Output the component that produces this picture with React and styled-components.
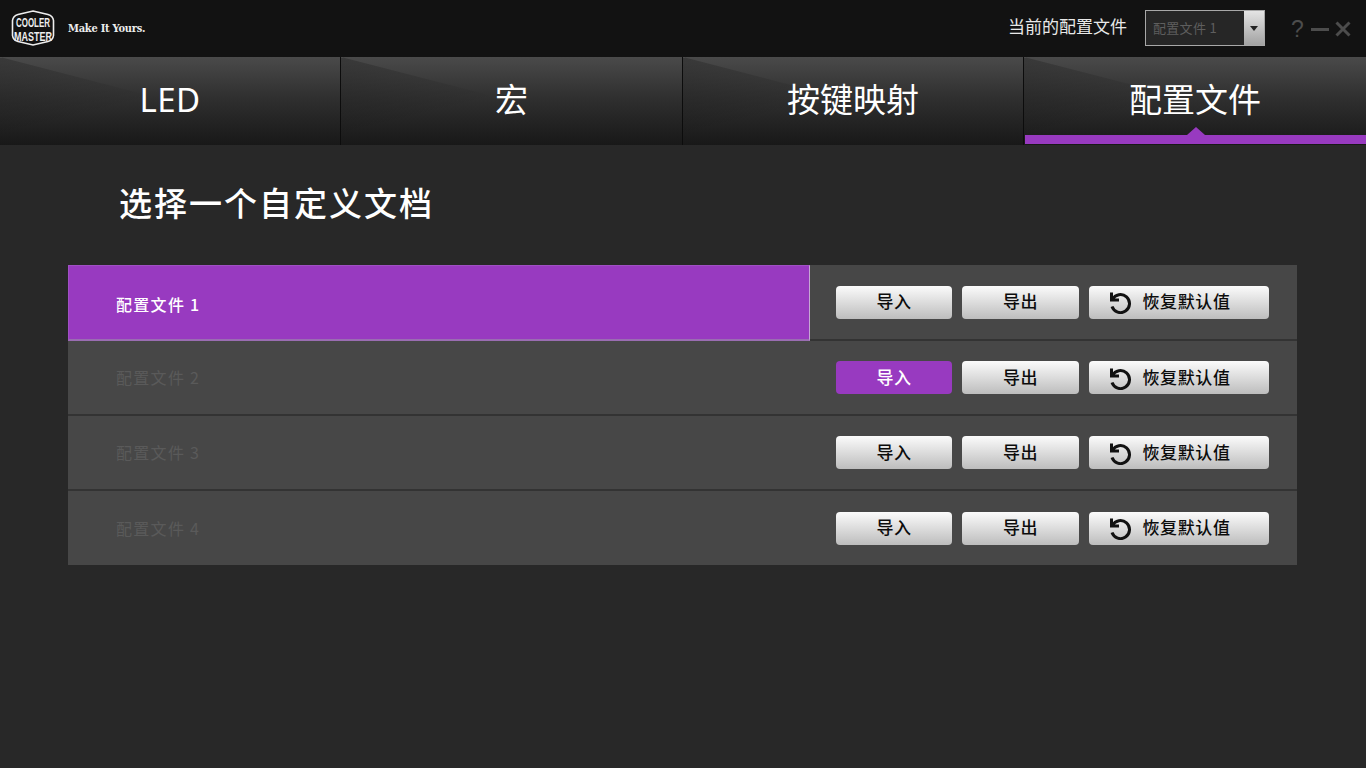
import React from "react";
import styled, { createGlobalStyle } from "styled-components";

const Global = createGlobalStyle`
  html, body { margin: 0; padding: 0; background: #282828; }
  body { font-family: "Noto Sans CJK SC", "Noto Sans", sans-serif; }
  * { box-sizing: border-box; }
`;

const Page = styled.div`
  width: 1366px; height: 768px; overflow: hidden; background: #282828;
  display: flex; flex-direction: column;
`;
const TopBar = styled.header`
  height: 57px; flex: none; background: #121212;
  display: flex; align-items: center; padding: 0 15px 0 11px;
`;
const LogoWrap = styled.div`display: flex; align-items: center; gap: 13px; margin-top: -1px;`;
const LogoSvg = styled.svg`overflow: visible; flex: none;`;
const Slogan = styled.span`
  font-family: "DejaVu Serif Condensed", "DejaVu Serif", serif;
  font-weight: 700; font-size: 11px; color: #ececec; letter-spacing: -0.25px; width: 78px; white-space: nowrap;
`;
const TopRight = styled.div`margin-left: auto; display: flex; align-items: center;`;
const CurrentLabel = styled.span`
  font-size: 17px; line-height: 20px; color: #e8e8e8; margin-right: 18px; margin-top: -5px; white-space: nowrap;
`;
const Select = styled.div`
  width: 120px; height: 36px; display: flex; border: 1px solid #a8a8a8; background: #262626; margin-top: -1px;
`;
const SelectValue = styled.span`
  flex: 1; font-size: 13px; line-height: 34px; color: #5e5e5e; padding-left: 7px; white-space: nowrap; letter-spacing: .3px;
`;
const SelectArrow = styled.span`
  width: 20px; display: flex; align-items: center; justify-content: center;
  background: linear-gradient(#e4e4e4, #a2a2a2);
  &::after {
    content: ""; border-left: 4px solid transparent; border-right: 4px solid transparent; border-top: 5px solid #222;
  }
`;
const WindowButtons = styled.div`display: flex; align-items: center; margin-left: 26px; color: #4c4c4c;`;
const HelpGlyph = styled.span`
  font-family: "Liberation Sans", sans-serif; font-size: 23px; line-height: 24px; width: 20px; font-weight: 400;
`;

const Tabs = styled.nav`
  height: 88px; flex: none; display: grid; grid-template-columns: 340px 342px 341px 343px;
`;
const Tab = styled.div`
  position: relative; overflow: hidden;
  display: flex; align-items: center; justify-content: center; padding-bottom: 3px;
  font-size: 33px; color: #fff; border-left: ${(p) => (p.$first ? "0" : "1px solid #0c0c0c")};
  background: linear-gradient(#4a4a4a 0%, #303030 45%, #181818 100%);
  &::before {
    content: ""; position: absolute; inset: 0;
    background: linear-gradient(165.5deg, rgba(0,0,0,0) 0, rgba(0,0,0,0) 1px, rgba(0,0,0,.22) 1px, rgba(0,0,0,0) 46%);
    clip-path: polygon(0 0, 100% 100%, 0 100%);
  }
`;
const TabLabel = styled.span`
  position: relative;
  font-family: "Noto Sans", "Noto Sans CJK SC", sans-serif;
  line-height: 40px;
  letter-spacing: ${(p) => (p.$latin ? ".5px" : "0")};
`;
const ActiveBar = styled.span`
  position: absolute; left: 1px; right: 0; bottom: 1px; height: 9px; background: #983ac0;
  &::before {
    content: ""; position: absolute; left: 50%; margin-left: -9px; top: -8px;
    border-left: 9px solid transparent; border-right: 9px solid transparent; border-bottom: 8px solid #983ac0;
  }
`;

const Content = styled.main`padding: 0 69px 0 68px;`;
const Title = styled.h1`
  margin: 31px 0 37px 51px; font-size: 33px; line-height: 52px; font-weight: 500; color: #fff; letter-spacing: 2px; white-space: nowrap;
`;
const List = styled.div`display: flex; flex-direction: column;`;
const Row = styled.div`
  height: 75px; display: flex; align-items: center; background: #474747;
  border-bottom: 2px solid #333;
  &:first-child { height: 76px; }
  &:last-child { height: 74px; border-bottom: 0; }
`;
const RowName = styled.div`
  width: 742px; height: 100%; align-self: stretch; display: flex; align-items: center; padding: 0 0 1px 48px;
  font-size: 16px; letter-spacing: 1.3px; white-space: pre;
  color: #5a5a5a;
  ${(p) => p.$selected && `
    height: calc(100% + 2px); margin-bottom: -2px; z-index: 1; padding: 2px 0 0 47px;
    color: #fff; font-weight: 500; background: #983ac0;
    border: 1px solid #a050c4; border-right-color: #c6a6d4; border-bottom: 2px solid #9a6db2;
  `}
`;
const Actions = styled.div`display: flex; gap: 10px; margin-left: 26px;`;
const Btn = styled.button`
  width: ${(p) => p.$w}px; height: 33px; padding: 0 ${(p) => p.$pr || 0}px 3px 0; border: 0; border-radius: 4px;
  display: flex; align-items: center; justify-content: center; gap: 11px;
  font-family: inherit; font-size: 17px; letter-spacing: .6px; font-weight: 500;
  color: ${(p) => (p.$active ? "#fff" : "#0c0c0c")};
  background: ${(p) => (p.$active ? "#983ac0" : "linear-gradient(#fbfbfb, #bdbdbd)")};
`;
const IconSvg = styled.svg`flex: none; margin-top: 3px; margin-left: -2px;`;

const Logo = () => (
  <LogoSvg width="44" height="36" viewBox="0 0 44 36">
    <path d="M22 1 L37 4.5 Q42 6 42.5 10.5 L42.5 25.5 Q42 30 37 31.5 L22 35 L7 31.5 Q2 30 1.5 25.5 L1.5 10.5 Q2 6 7 4.5 Z" fill="none" stroke="#eee" strokeWidth="1.6" />
    <text x="22" y="17" textAnchor="middle" fontFamily="Liberation Sans" fontWeight="700" fontSize="12" fill="#eee" textLength="34" lengthAdjust="spacingAndGlyphs">COOLER</text>
    <text x="22" y="30.8" textAnchor="middle" fontFamily="Liberation Sans" fontWeight="700" fontSize="12" fill="#eee" textLength="38" lengthAdjust="spacingAndGlyphs">MASTER</text>
  </LogoSvg>
);
const Minus = () => (
  <svg width="18" height="14" viewBox="0 0 18 14"><path d="M0 7.5h18" stroke="#4c4c4c" strokeWidth="3" /></svg>
);
const Cross = () => (
  <svg width="16" height="16" viewBox="0 0 16 16" style={{ marginLeft: 6 }}><path d="M1.5 1.5l13 13M14.5 1.5l-13 13" stroke="#4c4c4c" strokeWidth="3" /></svg>
);
const ResetIcon = () => (
  <IconSvg width="24" height="24" viewBox="0 0 24 24" fill="none" stroke="#111" strokeWidth="3">
    <path d="M4.5 9.5A9 9 0 1 1 4 16.5" />
    <path d="M3.5 2.5v7.5h7.5" />
  </IconSvg>
);

const tabs = ["LED", "宏", "按键映射", "配置文件"];
const rows = [1, 2, 3, 4];

export default function App() {
  return (
    <Page>
      <Global />
      <TopBar>
        <LogoWrap>
          <Logo />
          <Slogan>Make It Yours.</Slogan>
        </LogoWrap>
        <TopRight>
          <CurrentLabel>当前的配置文件</CurrentLabel>
          <Select>
            <SelectValue>配置文件 1</SelectValue>
            <SelectArrow />
          </Select>
          <WindowButtons>
            <HelpGlyph>?</HelpGlyph>
            <Minus />
            <Cross />
          </WindowButtons>
        </TopRight>
      </TopBar>
      <Tabs>
        {tabs.map((t, i) => (
          <Tab key={t} $first={i === 0}>
            <TabLabel $latin={i === 0}>{t}</TabLabel>
            {i === 3 && <ActiveBar />}
          </Tab>
        ))}
      </Tabs>
      <Content>
        <Title>选择一个自定义文档</Title>
        <List>
          {rows.map((n) => (
            <Row key={n}>
              <RowName $selected={n === 1}>{`配置文件 ${n}`}</RowName>
              <Actions>
                <Btn $w={116} $active={n === 2}>导入</Btn>
                <Btn $w={117}>导出</Btn>
                <Btn $w={180} $pr={18}><ResetIcon />恢复默认值</Btn>
              </Actions>
            </Row>
          ))}
        </List>
      </Content>
    </Page>
  );
}
